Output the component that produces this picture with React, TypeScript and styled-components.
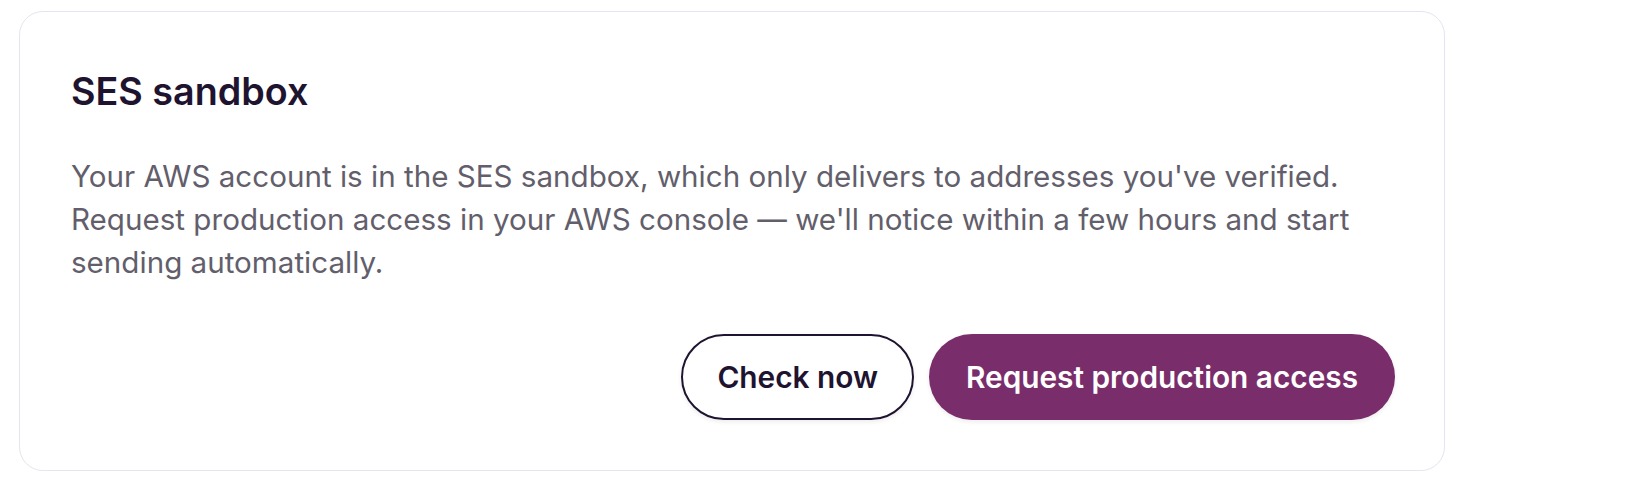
import React from "react";
import styled, { createGlobalStyle } from "styled-components";

const GlobalStyle = createGlobalStyle`
  html, body {
    margin: 0;
    padding: 0;
    background: #ffffff;
  }
  body {
    font-family: Inter, "Noto Sans", sans-serif;
    -webkit-font-smoothing: antialiased;
  }
`;

const Page = styled.div`
  padding: 11px 0 0 19px;
  width: 1426px;
`;

const Card = styled.section`
  box-sizing: border-box;
  width: 1426px;
  height: 460px;
  border: 1.75px solid #e6e4f0;
  border-radius: 24px;
  background: #ffffff;
  padding: 56px 49px 48px 51px;
  display: flex;
  flex-direction: column;
`;

const Title = styled.h2`
  margin: 0;
  font-family: Inter, sans-serif;
  font-size: 37.7px;
  line-height: 46px;
  font-weight: 600;
  color: #1f1430;
`;

const Body = styled.p`
  margin: 41px 0 0 0;
  font-family: Inter, sans-serif;
  font-size: 29.6px;
  line-height: 43px;
  font-weight: 400;
  color: #625e6b;
`;

const Actions = styled.div`
  margin-top: 50px;
  display: flex;
  justify-content: flex-end;
  gap: 15px;
`;

const Button = styled.button<{ $primary?: boolean }>`
  box-sizing: border-box;
  height: 86px;
  padding: ${(p) => (p.$primary ? "0 37px" : "0 34px")};
  border-radius: 999px;
  font-family: Inter, sans-serif;
  font-size: 29.8px;
  font-weight: 600;
  cursor: pointer;
  display: inline-flex;
  align-items: center;
  justify-content: center;
  border: ${(p) => (p.$primary ? "none" : "2px solid #1f1430")};
  background: ${(p) => (p.$primary ? "#7a2d6b" : "#ffffff")};
  color: ${(p) => (p.$primary ? "#ffffff" : "#1f1430")};
  box-shadow: 0 2px 4px rgba(31, 20, 48, 0.08);
`;

export default function App() {
  return (
    <>
      <GlobalStyle />
      <Page>
        <Card>
          <Title>SES sandbox</Title>
          <Body>
            Your AWS account is in the SES sandbox, which only delivers to addresses you've verified.
            Request production access in your AWS console — we'll notice within a few hours and start
            sending automatically.
          </Body>
          <Actions>
            <Button>Check now</Button>
            <Button $primary>Request production access</Button>
          </Actions>
        </Card>
      </Page>
    </>
  );
}
